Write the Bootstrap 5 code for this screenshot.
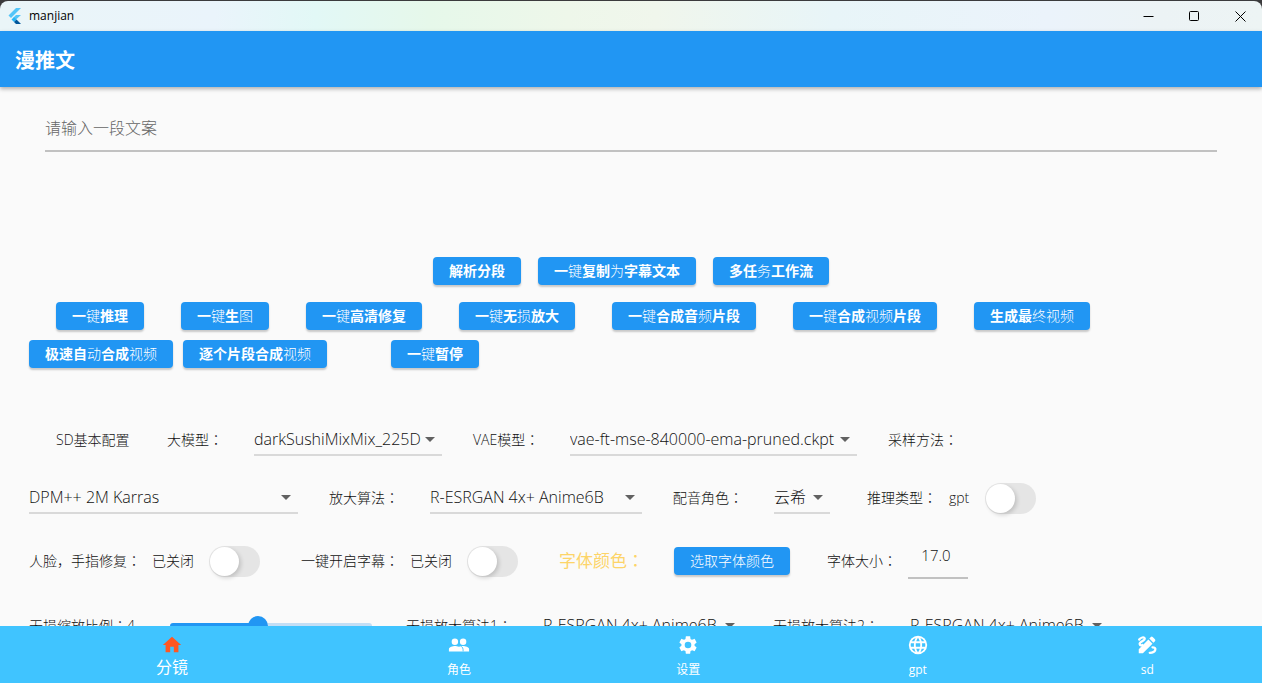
<!DOCTYPE html>
<html lang="zh-CN">
<head>
<meta charset="utf-8">
<meta name="viewport" content="width=device-width, initial-scale=1">
<title>manjian</title>
<link href="https://cdn.jsdelivr.net/npm/bootstrap@5.3.0/dist/css/bootstrap.min.css" rel="stylesheet">
<style>
:root { --ui: "Open Sans", "Noto Sans CJK SC", sans-serif; --ui-label: "Open Sans", "Noto Sans CJK TC", sans-serif; --blue: #2196f3; }
body { font-family: var(--ui); font-size: 14px; line-height: 20px; color: #212121; background: #3b3b3d; }
.shell { height: 100vh; padding-top: 1px; }
.titlebar { height: 30px; border-radius: 8px 8px 0 0; background: linear-gradient(90deg, #eaf5f8 0, #eaf4fb 17%, #e2f8f6 25%, #e6f8ea 34%, #eef7ea 45%, #f0f6ec 52%, #e8f5f8 66%, #ebf3fb 83%, #ecf3f5 92%, #edf4f4 100%); color: #000; font-size: 12px; }
.winbtn { width: 46px; height: 30px; border: 0; background: none; padding: 0 0 0 2px; display: grid; place-items: center; }
.winbtn svg, .logo { display: block; }
.appname { padding-left: 7px; }
.appbar { height: 56px; padding: 4px 15px 0; background: var(--blue); box-shadow: 0 2px 4px rgba(0,0,0,.3); z-index: 1; }
.appbar h1 { font-size: 20px; line-height: 28px; font-weight: 700; }
.stage { background: #fafafa; min-height: 0; }
.field { border: 0; border-radius: 0; background: none; font-family: var(--ui); font-size: 16px; font-weight: 300; color: #111; outline: 0; padding: 0; }
.compose { padding: 17px 45px 105px; }
.prompt { height: 48px; padding-top: 2px; border-bottom: 2px solid #c1c1c1; }
.prompt::placeholder { color: #666; opacity: 1; font-weight: 300; }
.act { height: 28px; padding: 0 16px; border: 0; border-radius: 4px; background: var(--blue); color: #fff; font-size: 14px; line-height: 28px; font-weight: 300; white-space: nowrap; box-shadow: 0 2px 2px rgba(0,0,0,.2); }
.act b { font-weight: 700; }
.act:hover { background: #1e88e5; color: #fff; }
.g10 { gap: 10px; } .g11 { gap: 11px; } .g17 { gap: 17px; } .g31 { gap: 31px; } .g37 { gap: 37px; }
.steps { padding-top: 17px; padding-bottom: 10px; }
.inset { padding-left: 56px; } .edge { padding-left: 29px; }
.apart { margin-left: 54px; }
.opts { padding-top: 56px; }
.opts label, .opts span { white-space: nowrap; flex: none; font-family: var(--ui-label); font-weight: 300; color: #111; }
.opts .hans { font-family: var(--ui); }
.line { height: 32px; }
.line2 { margin-top: 26px; } .line3 { margin-top: 31px; } .line4 { margin-top: 33px; }
.pick { appearance: none; flex: none; height: 32px; line-height: 28px; border-bottom: 2px solid #d9d9d9; background: url("data:image/svg+xml,%3Csvg xmlns='http://www.w3.org/2000/svg' width='10' height='5'%3E%3Cpath d='M0 0h10L5 5z' fill='%23616161'/%3E%3C/svg%3E") right 7px center no-repeat; }
.w56 { width: 56px; } .w66 { width: 66px; } .w80 { width: 80px; } .w110 { width: 110px; } .w188 { width: 188px; } .w199 { width: 199px; } .w212 { width: 212px; } .w269 { width: 269px; } .w287 { width: 287px; }
.toggle { appearance: none; flex: none; width: 51px; height: 31px; margin: 0 0 0 4px; border-radius: 16px; background: #e5e5e5; position: relative; }
.toggle::before { content: ""; position: absolute; left: 1px; top: 1px; width: 29px; height: 29px; border-radius: 50%; background: #fff; box-shadow: 2px 2px 4px rgba(0,0,0,.16); }
.toggle:checked { background: var(--blue); } .toggle:checked::before { left: 21px; }
.section { margin-left: 30px; } .section-sm { margin-left: 19px; } .section-md { margin-left: 26px; }
.infer { gap: 12px; padding-left: 6px; }
.opts .tint { color: #fdd468; font-size: 17px; font-weight: 400; }
.size { width: 60px; height: 44px; margin-bottom: 8px; padding: 0 4px 2px 0; font-size: 15px; text-align: center; border-bottom: 2px solid #c1c1c1; }
.zoomer { appearance: none; flex: none; width: 202px; height: 20px; margin: 0 3px 0 0; background: none; }
.zoomer::-webkit-slider-runnable-track { height: 6px; border-radius: 3px; background: linear-gradient(90deg, var(--blue) 43%, #c3def5 43%); }
.zoomer::-webkit-slider-thumb { appearance: none; width: 20px; height: 20px; margin-top: -7px; border-radius: 50%; background: var(--blue); }
.tabs { height: 57px; background: #40c4ff; z-index: 1; }
.tab { flex: 2 1 0; color: #fff; font-size: 12px; line-height: 16px; text-decoration: none; padding-top: 8px; }
.tab:hover { color: #fff; }
.tab svg { width: 22px; height: 22px; fill: currentColor; flex: none; }
.tab span { margin-top: 6px; }
.tab.active { flex-grow: 3; } .tab.active span { font-size: 16px; margin-top: 3px; } .tab.active svg { fill: #ff5722; }
</style>
</head>
<body>
<div class="shell d-flex flex-column overflow-hidden">
  <header class="titlebar d-flex align-items-center flex-shrink-0">
    <svg class="logo ms-2" width="14" height="16" viewBox="0 0 14 16"><path d="M8 0h5L3 10 .500 7.500z" fill="#54c5f8"/><path d="M8 7h5l-5 4.500L5.500 9.500z" fill="#54c5f8"/><path d="M3.500 11.500 6 9l2.500 2.500L6 14z" fill="#29b6f6"/><path d="M6 14l2.500-2.500L13 16H8z" fill="#01579b"/></svg>
    <span class="appname me-auto">manjian</span>
    <button class="winbtn" aria-label="最小化"><svg width="11" height="11" stroke="#000" fill="none"><path d="M.5 5.500h10"/></svg></button>
    <button class="winbtn" aria-label="最大化"><svg width="11" height="11" stroke="#000" fill="none"><rect x=".5" y=".5" width="9" height="9" rx="1"/></svg></button>
    <button class="winbtn" aria-label="关闭"><svg width="11" height="11" stroke="#000" fill="none"><path d="M.5.500l10 10M10.500.500l-10 10"/></svg></button>
  </header>
  <div class="appbar d-flex align-items-center flex-shrink-0"><h1 class="m-0 text-white">漫推文</h1></div>

  <main class="stage flex-grow-1 overflow-hidden">
    <div class="compose"><input class="field prompt w-100 d-block" placeholder="请输入一段文案" aria-label="文案"></div>

    <div class="d-flex justify-content-center g17">
      <button class="act btn"><b>解析分段</b></button>
      <button class="act btn"><b>一</b>键<b>复制</b>为<b>字幕文本</b></button>
      <button class="act btn"><b>多任</b>务<b>工作流</b></button>
    </div>
    <div class="steps inset d-flex g37">
      <button class="act btn"><b>一</b>键<b>推理</b></button>
      <button class="act btn"><b>一</b>键<b>生</b>图</button>
      <button class="act btn"><b>一</b>键<b>高清修复</b></button>
      <button class="act btn"><b>一</b>键<b>无</b>损<b>放大</b></button>
      <button class="act btn"><b>一</b>键<b>合成音</b>频<b>片段</b></button>
      <button class="act btn"><b>一</b>键<b>合成</b>视频<b>片段</b></button>
      <button class="act btn"><b>生成最</b>终视频</button>
    </div>
    <div class="edge d-flex g10">
      <button class="act btn"><b>极速自</b>动<b>合成</b>视频</button>
      <button class="act btn"><b>逐个片段合成</b>视频</button>
      <button class="act btn apart"><b>一</b>键<b>暂停</b></button>
    </div>

    <div class="opts">
      <div class="line inset d-flex align-items-center g31">
        <span class="w80">SD基本配置</span>
        <label for="model" lang="zh-TW">大模型：</label>
        <select id="model" class="field pick w188"><option>darkSushiMixMix_225D</option></select>
        <label for="vae" class="w66" lang="zh-TW">VAE模型：</label>
        <select id="vae" class="field pick w287"><option>vae-ft-mse-840000-ema-pruned.ckpt</option></select>
        <label for="sampler" lang="zh-TW">采样方法：</label>
      </div>
      <div class="line line2 edge d-flex align-items-center g31">
        <select id="sampler" class="field pick w269"><option>DPM++ 2M Karras</option></select>
        <label for="upscale" lang="zh-TW">放大算法：</label>
        <select id="upscale" class="field pick w212"><option>R-ESRGAN 4x+ Anime6B</option></select>
        <label for="voice" lang="zh-TW">配音角色：</label>
        <select id="voice" class="field pick w56"><option>云希</option></select>
        <div class="infer d-flex align-items-center">
          <label for="infer" lang="zh-TW">推理类型：</label><span>gpt</span>
          <input id="infer" type="checkbox" role="switch" class="toggle">
        </div>
      </div>
      <div class="line line3 edge d-flex align-items-center g11">
        <label for="face" lang="zh-TW">人脸<span class="hans" lang="zh-CN">，</span>手指修复：</label><span>已关闭</span>
        <input id="face" type="checkbox" role="switch" class="toggle">
        <label for="subs" class="section" lang="zh-TW">一键开启字幕：</label><span>已关闭</span>
        <input id="subs" type="checkbox" role="switch" class="toggle">
        <span class="tint section" lang="zh-TW">字体颜色：</span>
        <button class="act btn section-sm">选取字体颜色</button>
        <label for="size" class="section-md" lang="zh-TW">字体大小：</label>
        <input id="size" class="field size" value="17.0">
      </div>
      <div class="line line4 edge d-flex align-items-center g31">
        <label for="ratio" class="w110" lang="zh-TW">无损缩放比例：4</label>
        <input id="ratio" type="range" class="zoomer" min="1" max="8" value="4">
        <label for="up1" lang="zh-TW">无损放大算法1：</label>
        <select id="up1" class="field pick w199"><option>R-ESRGAN 4x+ Anime6B</option></select>
        <label for="up2" lang="zh-TW">无损放大算法2：</label>
        <select id="up2" class="field pick w199"><option>R-ESRGAN 4x+ Anime6B</option></select>
      </div>
    </div>
  </main>

  <nav class="tabs d-flex flex-shrink-0">
    <a href="#" class="tab active d-flex flex-column align-items-center"><svg viewBox="0 0 24 24"><path d="M10 20v-6h4v6h5v-8h3L12 3 2 12h3v8z"/></svg><span>分镜</span></a>
    <a href="#" class="tab d-flex flex-column align-items-center"><svg viewBox="0 0 24 24"><path d="M16.500 13c-1.200 0-3.070.34-4.500 1-1.430-.67-3.300-1-4.500-1C5.330 13 1 14.080 1 16.250V19h22v-2.750c0-2.170-4.330-3.250-6.500-3.250zM7.500 12a3.500 3.500 0 1 0 0-7 3.500 3.500 0 0 0 0 7zM16.500 12a3.500 3.500 0 1 0 0-7 3.500 3.500 0 0 0 0 7z"/><path d="M14.500 13.500c1.500 1 2 2 2 5.500" stroke="#40c4ff" stroke-width="1" fill="none"/></svg><span>角色</span></a>
    <a href="#" class="tab d-flex flex-column align-items-center"><svg viewBox="0 0 24 24"><path d="M19.140 12.940c.04-.3.060-.61.060-.94 0-.32-.02-.64-.07-.94l2.030-1.580c.18-.14.230-.41.120-.61l-1.920-3.320c-.12-.22-.37-.29-.59-.22l-2.390.96c-.5-.38-1.030-.7-1.620-.94l-.36-2.540c-.04-.24-.24-.41-.48-.41h-3.840c-.24 0-.43.170-.47.410l-.36 2.540c-.59.240-1.130.570-1.620.940l-2.390-.96c-.22-.08-.47 0-.59.220L2.740 8.870c-.12.210-.08.470.120.610l2.030 1.580c-.05.300-.09.630-.09.940s.02.640.07.940l-2.030 1.580c-.18.140-.23.410-.12.610l1.920 3.320c.12.220.37.290.59.220l2.390-.96c.5.380 1.030.700 1.620.940l.36 2.540c.05.240.240.410.480.410h3.840c.24 0 .44-.17.470-.41l.36-2.540c.59-.24 1.130-.56 1.620-.94l2.390.96c.22.080.470 0 .59-.22l1.920-3.320c.12-.22.070-.47-.12-.61l-2.010-1.580zM12 15.600A3.600 3.600 0 1 1 12 8.400a3.600 3.600 0 0 1 0 7.200z"/></svg><span>设置</span></a>
    <a href="#" class="tab d-flex flex-column align-items-center"><svg viewBox="0 0 24 24"><circle cx="12" cy="12" r="10"/><path fill="#40c4ff" d="M18.920 8h-2.950a15.650 15.650 0 0 0-1.380-3.560A8.030 8.030 0 0 1 18.920 8zM12 4.040c.83 1.200 1.480 2.530 1.910 3.960h-3.820c.43-1.430 1.080-2.760 1.910-3.960zM4.260 14a8.200 8.200 0 0 1 0-4h3.380a16.500 16.500 0 0 0 0 4zM5.080 16h2.950c.32 1.250.780 2.450 1.380 3.560A7.990 7.990 0 0 1 5.080 16zM8.030 8H5.080a7.990 7.990 0 0 1 4.330-3.560C8.810 5.550 8.350 6.750 8.030 8zM12 19.960c-.83-1.200-1.480-2.530-1.910-3.960h3.820c-.43 1.430-1.080 2.760-1.910 3.960zM14.340 14H9.660a14.700 14.700 0 0 1 0-4h4.680a14.700 14.700 0 0 1 0 4zM14.590 19.560c.6-1.110 1.060-2.310 1.380-3.560h2.950a8.030 8.030 0 0 1-4.330 3.560zM16.360 14a16.500 16.500 0 0 0 0-4h3.380a8.200 8.200 0 0 1 0 4z"/></svg><span>gpt</span></a>
    <a href="#" class="tab d-flex flex-column align-items-center"><svg viewBox="0 0 24 24"><path d="M3 21v-4.500L13.500 6l4.500 4.500L7.500 21zM14.500 5l1.700-1.700a1.500 1.500 0 0 1 2 0l2.500 2.500a1.500 1.500 0 0 1 0 2L19 9.500z"/><path d="M3.500 6C5 4 9 2.500 9.500 5S3.500 8.500 4 11s3 1 3 1M18 14.500c2.500 0 3.500 1.200 3 2.800-.6 2-3.500 3.200-6 3.200" fill="none" stroke="#fff" stroke-width="2.500" stroke-linecap="round"/></svg><span>sd</span></a>
  </nav>
</div>
<script src="https://cdn.jsdelivr.net/npm/bootstrap@5.3.0/dist/js/bootstrap.bundle.min.js"></script>
</body>
</html>
